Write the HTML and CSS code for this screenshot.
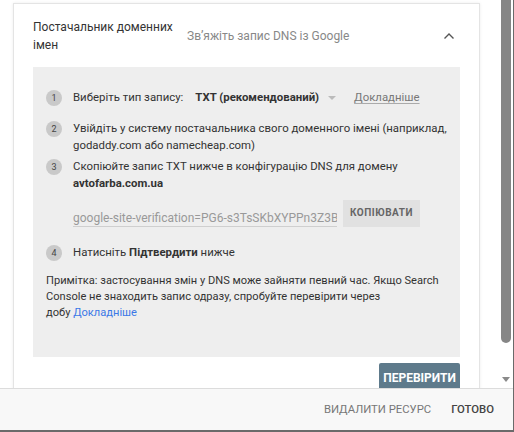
FILE: index.html
```html
<!DOCTYPE html>
<html lang="uk">
<head>
<meta charset="utf-8">
<link rel="stylesheet" href="styles.css">
</head>
<body>
<div class="window">
  <div class="body">
    <div class="main">
      <div class="card">
        <div class="header">
          <div class="title">Постачальник доменних імен</div>
          <div class="subtitle">Зв’яжіть запис DNS із Google</div>
          <svg class="chev" width="12" height="8" viewBox="0 0 12 8"><path d="M1.5 6.5 L6 2 L10.5 6.5" fill="none" stroke="#555" stroke-width="1.4"/></svg>
        </div>
        <div class="panel">
          <div class="step s1">
            <span class="num">1</span>
            <div class="text row1">
              <span>Виберіть тип запису:</span>
              <span class="sel">TXT (рекомендований)</span>
              <span class="tri"></span>
              <span class="more">Докладніше</span>
            </div>
          </div>
          <div class="step s2">
            <span class="num">2</span>
            <div class="text">Увійдіть у систему постачальника свого доменного імені (наприклад, godaddy.com або namecheap.com)</div>
          </div>
          <div class="step s3">
            <span class="num">3</span>
            <div class="text">Скопіюйте запис TXT нижче в конфігурацію DNS для домену <b>avtofarba.com.ua</b></div>
          </div>
          <div class="copyrow">
            <div class="field">google-site-verification=PG6-s3TsSKbXYPPn3Z3BqZ1</div>
            <div class="copybtn">КОПІЮВАТИ</div>
          </div>
          <div class="step s4">
            <span class="num">4</span>
            <div class="text">Натисніть <b>Підтвердити</b> нижче</div>
          </div>
          <div class="note">Примітка: застосування змін у DNS може зайняти певний час. Якщо Search Console не знаходить запис одразу, спробуйте перевірити через добу&nbsp;<span class="link">Докладніше</span></div>
        </div>
        <div class="actions">
          <div class="verify">ПЕРЕВІРИТИ</div>
        </div>
      </div>
    </div>
    <div class="scrollbar">
      <div class="thumb"></div>
      <div class="arrow"></div>
    </div>
  </div>
  <div class="footer">
    <span class="fbtn del">ВИДАЛИТИ РЕСУРС</span>
    <span class="fbtn done">ГОТОВО</span>
  </div>
</div>
</body>
</html>
```

FILE: styles.css
```css
html, body {
  margin: 0;
  padding: 0;
  background: #fff;
}
body {
  width: 514px;
  height: 432px;
  overflow: hidden;
  font-family: Roboto, "Noto Sans", Arial, sans-serif;
  color: #333;
}
.window {
  width: 513px;
  height: 430px;
  border-right: 1px solid #6a6a6a;
  border-bottom: 2px solid #6a6a6a;
  display: flex;
  flex-direction: column;
}
.body {
  height: 388px;
  display: flex;
  overflow: hidden;
}
.main {
  flex: 1;
  padding: 3px 0 0 13px;
  overflow: hidden;
}
.card {
  width: 467px;
  height: 420px;
  border: 1px solid #e4e4e4;
  border-bottom: none;
  box-shadow: 0 0 3px rgba(0,0,0,0.08);
  background: #fff;
  padding: 14px 19px 0 19px;
  box-sizing: border-box;
}
.header {
  display: flex;
  align-items: center;
  height: 36px;
  margin-bottom: 13px;
}
.title {
  width: 154px;
  font-size: 12px;
  line-height: 18px;
  color: #333;
}
.subtitle {
  flex: 1;
  font-size: 12px;
  color: #888;
}
.chev {
  margin-right: 5px;
}
.panel {
  background: #eeeeee;
  height: 290px;
  box-sizing: border-box;
  padding: 16px 12px 0 13px;
  font-size: 11.4px;
}
.step {
  display: flex;
  align-items: flex-start;
}
.num {
  flex: none;
  width: 16px;
  height: 16px;
  border-radius: 50%;
  background: #c9c9c9;
  color: #444;
  font-size: 9px;
  line-height: 16px;
  text-align: center;
  margin-right: 11px;
  margin-top: 1px;
}
.text {
  line-height: 17px;
  color: #333;
}
.s1 {
  height: 28px;
  align-items: center;
}
.s1 .num { margin-top: 2px; }
.row1 {
  display: flex;
  align-items: center;
  white-space: nowrap;
}
.sel {
  font-weight: bold;
  margin-left: 12px;
  color: #333;
}
.tri {
  width: 0;
  height: 0;
  border-left: 4px solid transparent;
  border-right: 4px solid transparent;
  border-top: 4px solid #bbb;
  margin-left: 9px;
  margin-top: 1px;
}
.more {
  margin-left: 18px;
  color: #777;
  text-decoration: underline;
  text-decoration-color: #aaa;
  text-underline-offset: 2px;
}
.s2 { margin-top: 9px; }
.s3 { margin-top: 4px; }
.copyrow {
  display: flex;
  align-items: flex-start;
  margin-top: 8px;
  padding-left: 27px;
}
.field {
  width: 264px;
  overflow: hidden;
  white-space: nowrap;
  font-size: 12px;
  color: #999;
  height: 26px;
  line-height: 36px;
  border-bottom: 1px solid #cfcfcf;
}
.copybtn {
  margin-left: 6px;
  width: 77px;
  height: 27px;
  background: #e1e1e1;
  color: #666;
  font-size: 10px;
  font-weight: bold;
  letter-spacing: 0.5px;
  text-align: center;
  line-height: 26px;
}
.s4 { margin-top: 17px; }
.note {
  margin-top: 12px;
  line-height: 16px;
  font-size: 11.1px;
  color: #333;
}
.link { color: #3b78e7; }
.actions {
  display: flex;
  justify-content: flex-end;
  padding-top: 6px;
}
.verify {
  width: 81px;
  height: 30px;
  background: #5e7a8b;
  color: #fff;
  font-weight: bold;
  font-size: 12px;
  text-align: center;
  line-height: 30px;
  border-radius: 2px;
}
.scrollbar {
  width: 16px;
  position: relative;
  background: #fff;
}
.thumb {
  position: absolute;
  left: 4px;
  top: 0;
  width: 10px;
  height: 343px;
  background: #868686;
  border-radius: 0 0 5px 5px;
}
.arrow {
  position: absolute;
  left: 5px;
  top: 377px;
  width: 0;
  height: 0;
  border-left: 4px solid transparent;
  border-right: 4px solid transparent;
  border-top: 5px solid #8a8a8a;
}
.footer {
  flex: 1;
  border-top: 1px solid #dcdcdc;
  background: #f8f8f8;
  display: flex;
  justify-content: flex-end;
  align-items: center;
  padding-right: 19px;
  font-size: 11.3px;
}
.fbtn { color: #777; }
.del { margin-right: 20px; }
.done { color: #444; font-weight: 500; }
```
